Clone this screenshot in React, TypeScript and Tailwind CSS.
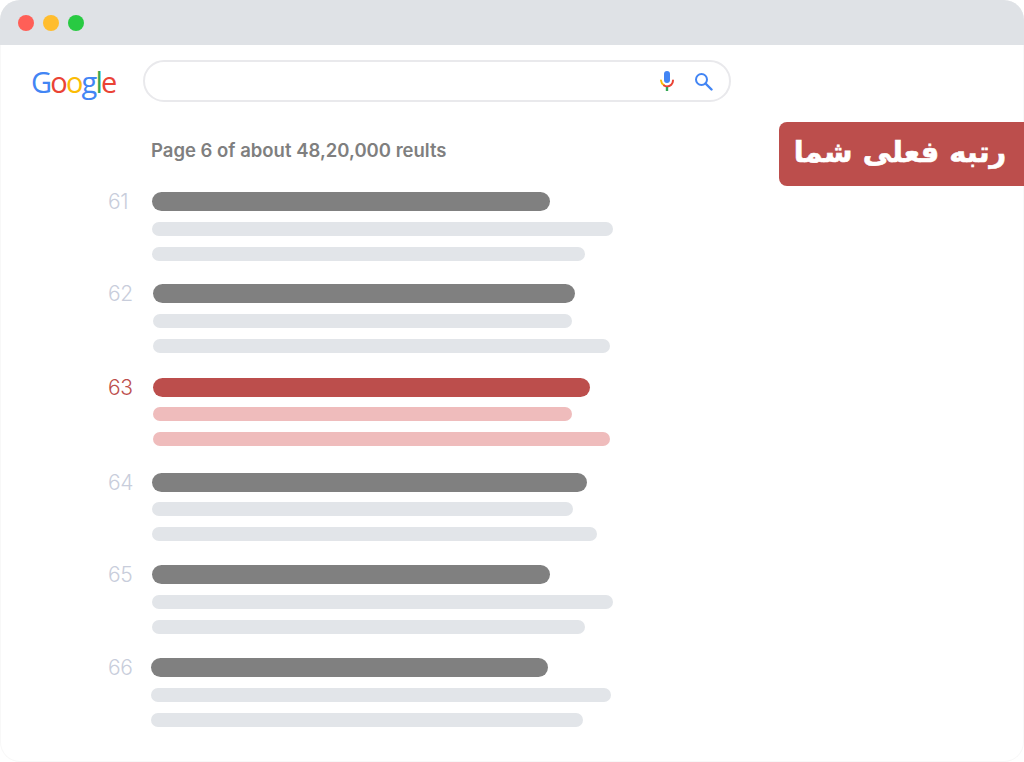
const GOOGLE_LETTERS = [
  { ch: "G", color: "text-[#4285f4]" },
  { ch: "o", color: "text-[#ea4335]" },
  { ch: "o", color: "text-[#fbbc05]" },
  { ch: "g", color: "text-[#4285f4]" },
  { ch: "l", color: "text-[#34a853]" },
  { ch: "e", color: "text-[#ea4335]" },
];

type Result = {
  num: number;
  ml: string;
  mt: string;
  gap: string;
  titleW: string;
  lineA: string;
  lineB: string;
  active?: boolean;
};

const RESULTS: Result[] = [
  { num: 61, ml: "ml-0", mt: "mt-0", gap: "mt-[11px]", titleW: "w-[398px]", lineA: "w-[461px]", lineB: "w-[433px]" },
  { num: 62, ml: "ml-px", mt: "mt-[23px]", gap: "mt-[11px]", titleW: "w-[422px]", lineA: "w-[419px]", lineB: "w-[457px]" },
  { num: 63, ml: "ml-px", mt: "mt-[25px]", gap: "mt-[10px]", titleW: "w-[437px]", lineA: "w-[419px]", lineB: "w-[457px]", active: true },
  { num: 64, ml: "ml-0", mt: "mt-[27px]", gap: "mt-[10px]", titleW: "w-[435px]", lineA: "w-[421px]", lineB: "w-[445px]" },
  { num: 65, ml: "ml-0", mt: "mt-[24px]", gap: "mt-[11px]", titleW: "w-[398px]", lineA: "w-[461px]", lineB: "w-[433px]" },
  { num: 66, ml: "-ml-px", mt: "mt-[24px]", gap: "mt-[11px]", titleW: "w-[397px]", lineA: "w-[460px]", lineB: "w-[432px]" },
];

const ResultRow = ({ result }: { result: Result }) => (
  <div className={`flex ${result.mt}`}>
    <span
      className={`w-[44px] shrink-0 text-[21px] font-light leading-[20px] tracking-[-0.3px] ${
        result.active ? "text-[#bc4e4c]" : "text-[#c8cddb]"
      }`}
    >
      {result.num}
    </span>
    <div className={`flex flex-col ${result.ml}`}>
      <div className={`h-[19px] rounded-full ${result.titleW} ${result.active ? "bg-[#bc4e4c]" : "bg-[#808080]"}`} />
      <div className={`h-[14px] rounded-full ${result.gap} ${result.lineA} ${result.active ? "bg-[#efbcbc]" : "bg-[#e2e5e9]"}`} />
      <div className={`mt-[11px] h-[14px] rounded-full ${result.lineB} ${result.active ? "bg-[#efbcbc]" : "bg-[#e2e5e9]"}`} />
    </div>
  </div>
);

export default function App() {
  return (
    <div className="flex h-[762px] w-[1024px] flex-col overflow-hidden rounded-[20px] bg-white font-['Inter',sans-serif] shadow-[inset_0_0_0_1px_#f8f8f8]">
      <div className="flex h-[45px] shrink-0 items-center gap-[9px] bg-[#dfe2e6] pl-[18px]">
        <span className="h-[16px] w-[16px] rounded-full bg-[#ff5f57]" />
        <span className="h-[16px] w-[16px] rounded-full bg-[#ffbd2e]" />
        <span className="h-[16px] w-[16px] rounded-full bg-[#28ca42]" />
      </div>

      <div className="mt-[15px] flex h-[42px] items-center pl-[31px]">
        <div className="w-[112px] shrink-0 font-['Open_Sans',sans-serif] text-[29px] font-medium leading-none tracking-[-1.8px]">
          {GOOGLE_LETTERS.map((l, i) => (
            <span key={i} className={l.color}>
              {l.ch}
            </span>
          ))}
        </div>
        <div className="flex h-[42px] w-[588px] items-center justify-end gap-[19px] rounded-full border-2 border-[#e9e9ec] pr-[16px]">
          <svg width="16" height="22" viewBox="0 0 16 22" fill="none">
            <rect x="5" y="1" width="6" height="12" rx="3" fill="#4285f4" />
            <path d="M2 10.5a6 6 0 0 0 3 4.6" stroke="#fbbc05" strokeWidth="2" strokeLinecap="round" />
            <path d="M14 10.5a6 6 0 0 1-6 6 6 6 0 0 1-3-1" stroke="#ea4335" strokeWidth="2" strokeLinecap="round" />
            <path d="M8 17v4" stroke="#34a853" strokeWidth="2.4" />
          </svg>
          <svg width="19" height="19" viewBox="0 0 19 19" fill="none" stroke="#4285f4" strokeWidth="2">
            <circle cx="7.5" cy="7.5" r="5.5" />
            <path d="M11.5 11.5l6 6" strokeWidth="2.4" strokeLinecap="round" />
          </svg>
        </div>
      </div>

      <div className="flex flex-1 justify-between">
        <div className="pl-[108px] pt-[36px]">
          <p className="ml-[43px] text-[18.5px] font-semibold leading-[24px] text-[#7f7f7f]">
            Page 6 of about 48,20,000 reults
          </p>
          <div className="mt-[30px]">
            {RESULTS.map((r) => (
              <ResultRow key={r.num} result={r} />
            ))}
          </div>
        </div>

        <div className="mt-[20px] flex h-[64px] w-[245px] items-center justify-center rounded-l-[8px] bg-[#bc4e4c] pb-[4px] pr-[3px]">
          <span
            dir="rtl"
            className="font-['DejaVu_Sans',sans-serif] text-[29px] font-bold leading-none text-white [-webkit-text-stroke:0.6px_white]"
          >
            رتبه فعلی شما
          </span>
        </div>
      </div>
    </div>
  );
}
